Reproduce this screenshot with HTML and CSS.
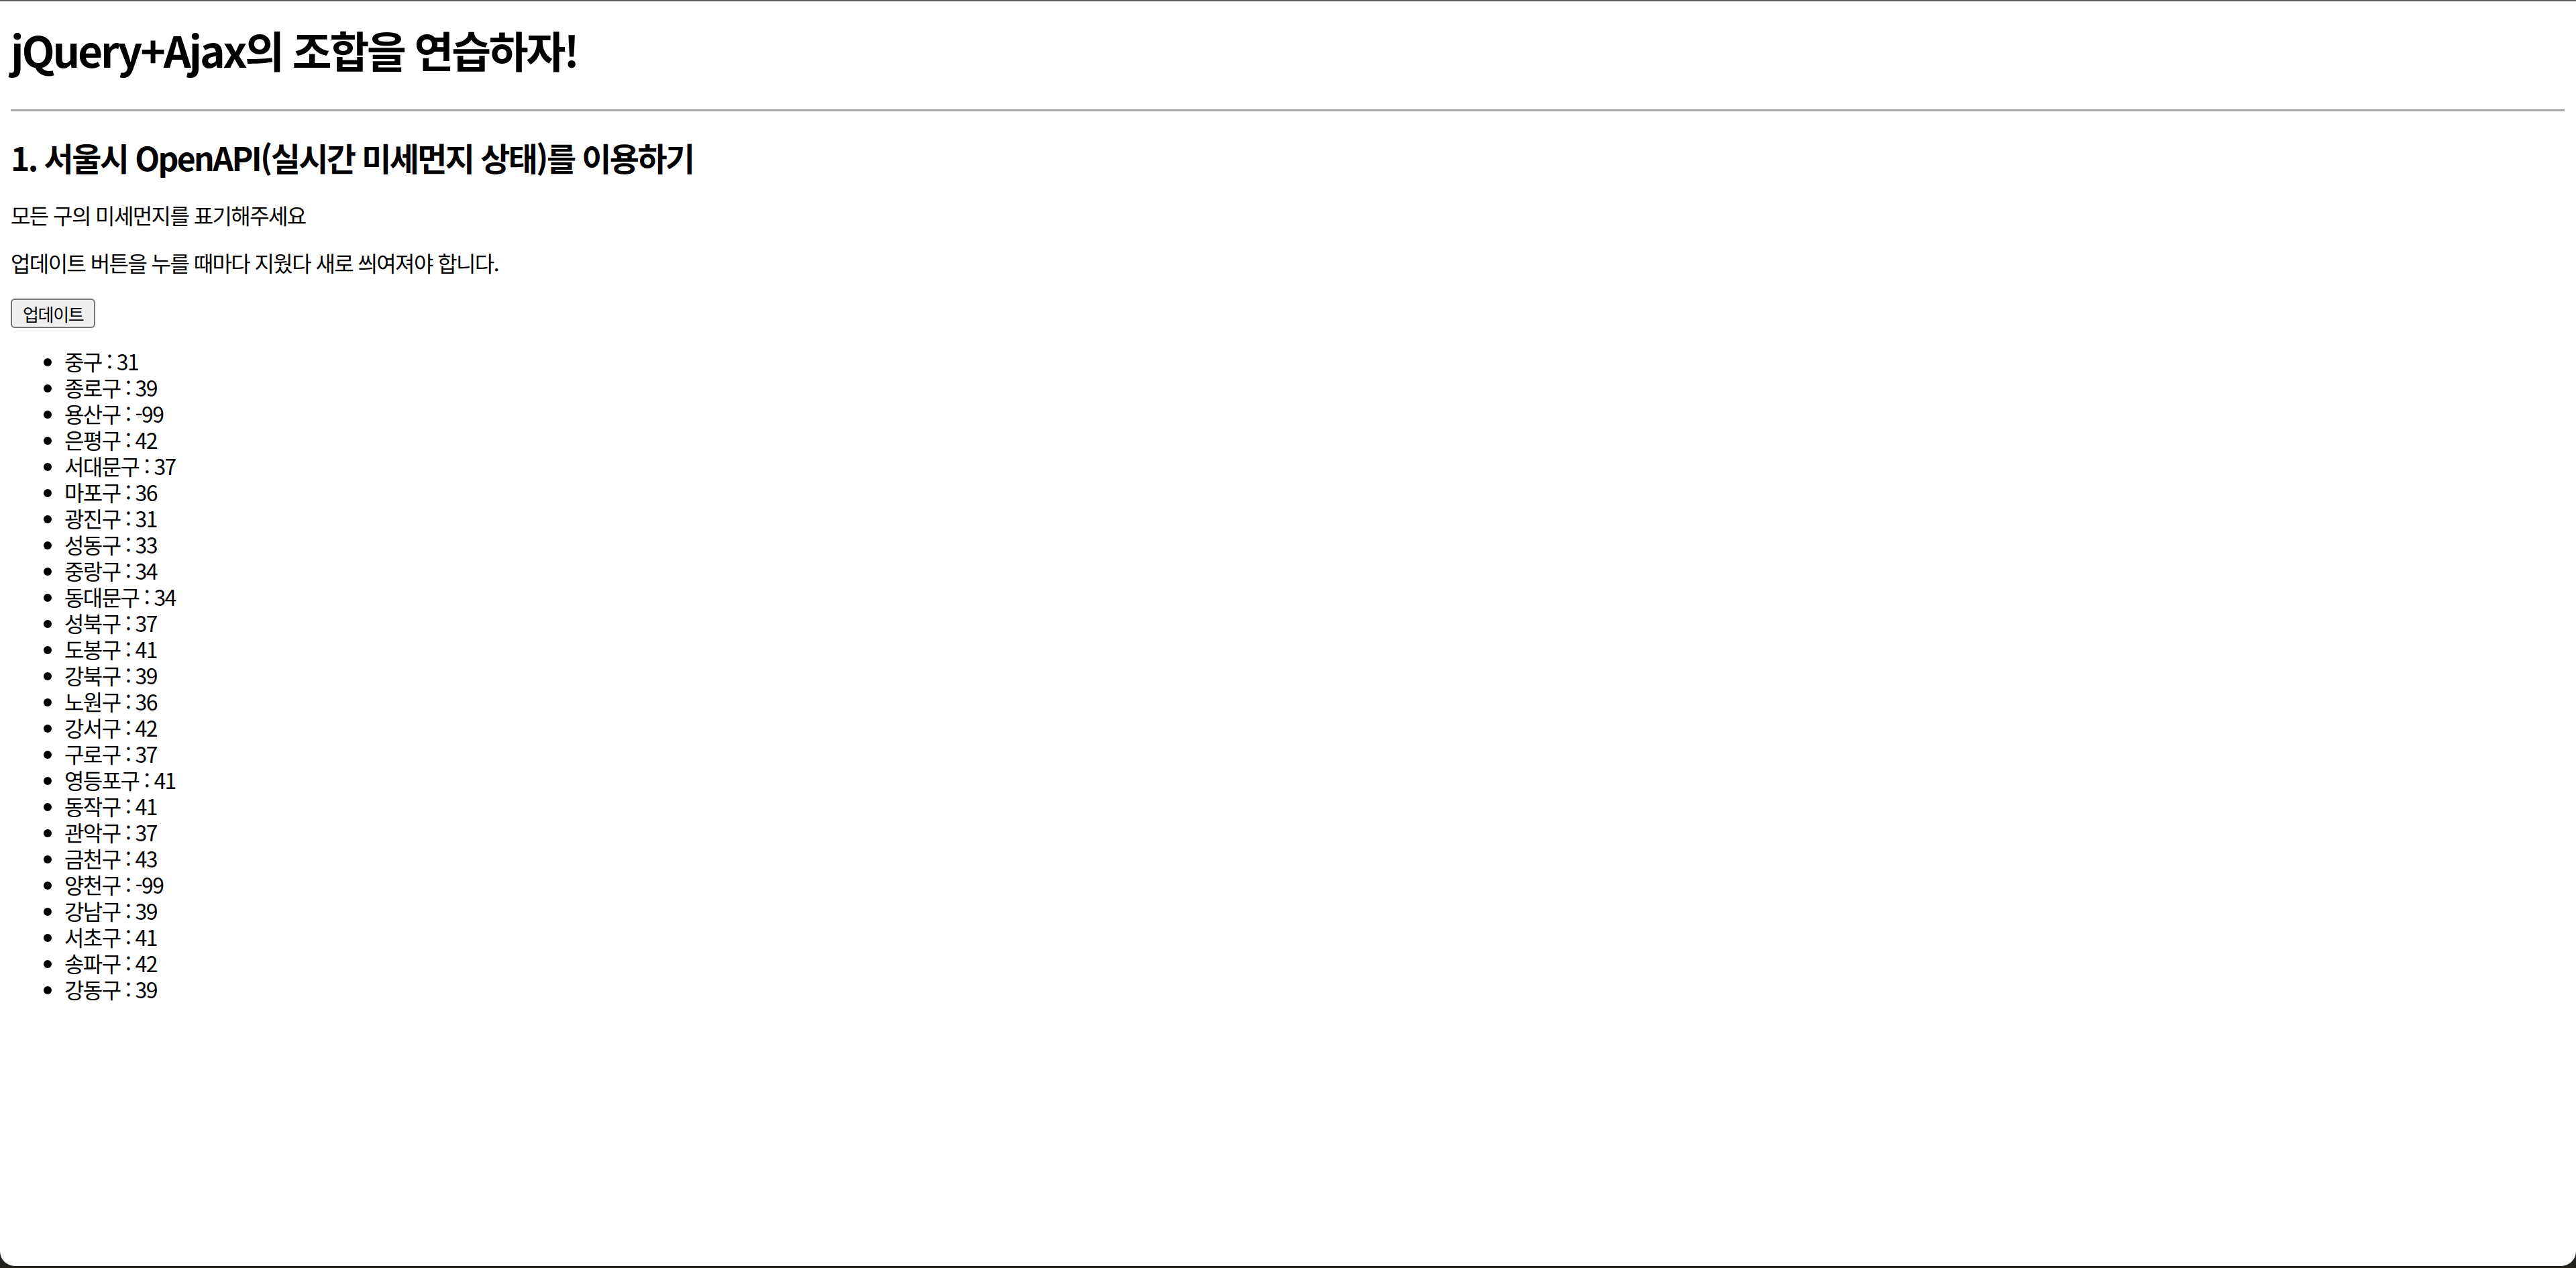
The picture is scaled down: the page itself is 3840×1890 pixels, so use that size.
FILE: index.html
```html
<!DOCTYPE html>
<html lang="ko">
<head>
	<meta charset="UTF-8">
	<meta name="viewport" content="width=device-width, initial-scale=1.0">
	<title>jQuery+Ajax 연습</title>
	<link rel="stylesheet" href="styles.css">
</head>
<body>
	<h1>jQuery+Ajax의 조합을 연습하자!</h1>
	<hr>
	<div class="dust">
		<h2>1. 서울시 OpenAPI(실시간 미세먼지 상태)를 이용하기</h2>
		<p>모든 구의 미세먼지를 표기해주세요</p>
		<p>업데이트 버튼을 누를 때마다 지웠다 새로 씌여져야 합니다.</p>
		<button class="update-btn">업데이트</button>
		<ul class="gu-list">
			<li>중구 : 31</li>
			<li>종로구 : 39</li>
			<li>용산구 : -99</li>
			<li>은평구 : 42</li>
			<li>서대문구 : 37</li>
			<li>마포구 : 36</li>
			<li>광진구 : 31</li>
			<li>성동구 : 33</li>
			<li>중랑구 : 34</li>
			<li>동대문구 : 34</li>
			<li>성북구 : 37</li>
			<li>도봉구 : 41</li>
			<li>강북구 : 39</li>
			<li>노원구 : 36</li>
			<li>강서구 : 42</li>
			<li>구로구 : 37</li>
			<li>영등포구 : 41</li>
			<li>동작구 : 41</li>
			<li>관악구 : 37</li>
			<li>금천구 : 43</li>
			<li>양천구 : -99</li>
			<li>강남구 : 39</li>
			<li>서초구 : 41</li>
			<li>송파구 : 42</li>
			<li>강동구 : 39</li>
		</ul>
	</div>
</body>
</html>
```

FILE: styles.css
```css
html {
	background-color: #23231b;
}

body {
	margin: 0;
	padding: 0 17px 1px 16px;
	min-height: calc(100vh - 3px);
	box-sizing: border-box;
	background-color: #fff;
	border-top: 2px solid #5c5c5c;
	border-radius: 0 0 22px 22px;
	font-family: "Noto Sans CJK KR", sans-serif;
	font-size: 32px;
	line-height: 39px;
	letter-spacing: -1.6px;
	color: #000;
}

h1 {
	margin: 33px 0 51px;
	font-size: 64px;
	line-height: 77px;
	font-weight: bold;
	letter-spacing: -3.2px;
}

hr {
	margin: 0;
	height: 0;
	border: none;
	border-top: 2px solid #9a9a9a;
	border-bottom: 2px solid #eee;
}

h2 {
	margin: 38px 0;
	font-size: 48px;
	line-height: 58px;
	font-weight: bold;
	letter-spacing: -2.6px;
}

p {
	margin: 32px 0;
}

.update-btn {
	height: 44px;
	margin-top: 2px;
	padding: 0 16px;
	font-family: "Noto Sans CJK KR", sans-serif;
	font-size: 26px;
	letter-spacing: -1.3px;
	color: #000;
	background-color: #efefef;
	border: 2px solid #767676;
	border-radius: 6px;
	vertical-align: top;
}

.gu-list {
	margin: 30px 0 32px;
	padding-left: 80px;
}
```
